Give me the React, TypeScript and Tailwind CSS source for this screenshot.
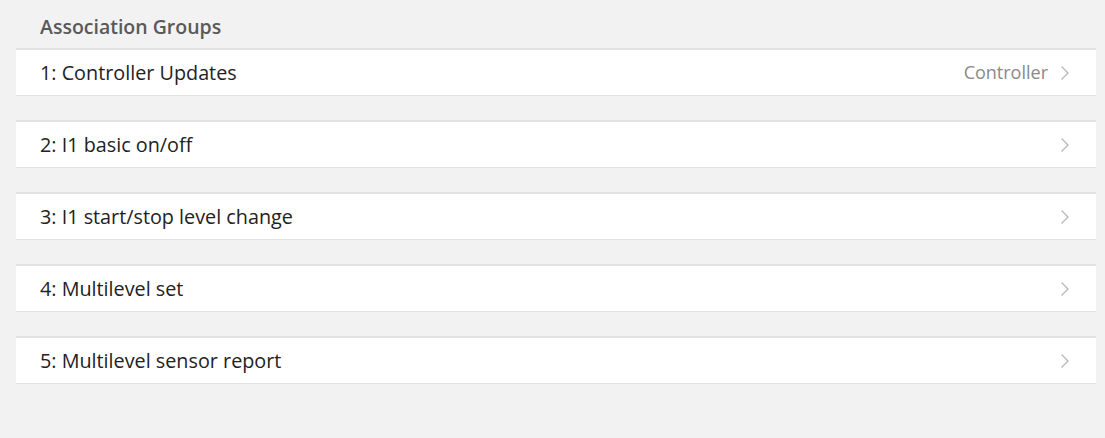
const groups = [
  { id: 1, name: 'Controller Updates', value: 'Controller' },
  { id: 2, name: 'I1 basic on/off' },
  { id: 3, name: 'I1 start/stop level change' },
  { id: 4, name: 'Multilevel set' },
  { id: 5, name: 'Multilevel sensor report' },
];

function Chevron() {
  return (
    <svg width="10" height="16" viewBox="0 0 10 16" fill="none" aria-hidden="true">
      <path d="M1.5 1.5 L8 8 L1.5 14.5" stroke="#b8b8b8" strokeWidth="1.3" />
    </svg>
  );
}

export default function App() {
  return (
    <div
      className="min-h-screen bg-[#f2f2f2] pl-4 pr-[9px]"
      style={{ fontFamily: '"Open Sans", "Noto Sans", sans-serif' }}
    >
      <div className="flex h-12 items-center pl-6 pt-1.5 text-[19.5px] font-semibold text-[#595959]">
        Association Groups
      </div>
      <div className="flex flex-col gap-6">
        {groups.map((g) => (
          <div
            key={g.id}
            className="flex h-12 items-center border-t-2 border-b border-[#e2e2e2] bg-white pl-6 pr-[26px]"
          >
            <span className="flex-1 text-[19.8px] text-[#222222]">
              {g.id}: {g.name}
            </span>
            {g.value && <span className="mr-[12px] text-[18px] text-[#8a8a8a]">{g.value}</span>}
            <Chevron />
          </div>
        ))}
      </div>
    </div>
  );
}
